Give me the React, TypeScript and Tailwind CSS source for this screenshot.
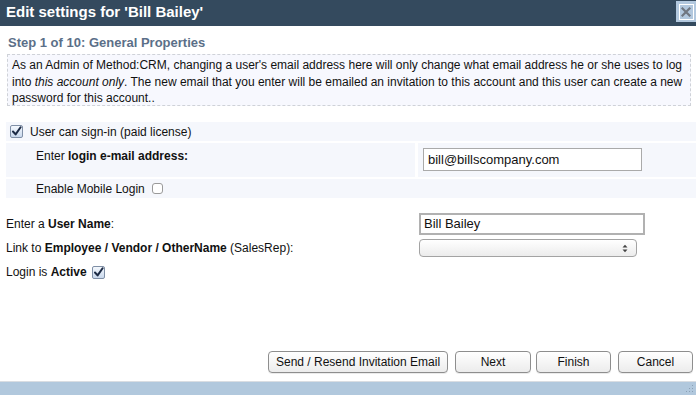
import React from "react"

function Check({ checked }: { checked: boolean }) {
  return (
    <span className="inline-flex w-[13px] h-[13px] shrink-0 items-center justify-center rounded-[2px] border border-[#7f8fa6] bg-gradient-to-b from-[#f4f8fd] to-[#c9d8ec]">
      {checked && (
        <svg width="11" height="11" viewBox="0 0 11 11">
          <path d="M2 5.5 L4.6 8.4 L9.6 1.2" fill="none" stroke="#1d2b45" strokeWidth="2" strokeLinecap="round" strokeLinejoin="round" />
        </svg>
      )}
    </span>
  )
}

function Button({ label, w }: { label: string; w: string }) {
  return (
    <button
      className={`${w} h-[22px] rounded-[4px] border border-[#8e8e8e] bg-gradient-to-b from-[#ffffff] to-[#ececec] text-[12px] text-[#111] shadow-[0_1px_0_rgba(0,0,0,0.08)]`}
    >
      {label}
    </button>
  )
}

export default function App() {
  return (
    <div
      className="w-[696px] h-[395px] flex flex-col bg-white text-[12px] text-[#111] overflow-hidden"
      style={{ fontFamily: '"Liberation Sans", Arial, sans-serif' }}
    >
      {/* Title bar */}
      <div className="h-[26px] shrink-0 bg-[#344a5e] flex items-start justify-between">
        <span className="pl-[6px] pt-[3px] text-[15px] font-bold text-white leading-[18px]">
          Edit settings for 'Bill Bailey'
        </span>
        <span className="mt-[1px] w-[20px] h-[21px] bg-[#b2c8de] flex items-center justify-center">
          <span className="w-[15px] h-[16px] border border-white flex items-center justify-center">
            <svg width="10" height="10" viewBox="0 0 10 10">
              <path d="M1.5 1.5 L8.5 8.5 M8.5 1.5 L1.5 8.5" stroke="#6f7680" strokeWidth="2.2" strokeLinecap="square" />
            </svg>
          </span>
        </span>
      </div>

      {/* Step header */}
      <div className="pl-[8px] pt-[9px] text-[13px] font-bold text-[#5b6f88] leading-[16px]">
        Step 1 of 10: General Properties
      </div>

      {/* Info box */}
      <div className="mt-[3px] ml-[7px] mr-[5px] h-[52px] overflow-hidden border border-dashed border-[#cfd2d8] bg-[#f7f8fe] px-[4px] pt-[2px] leading-[16.5px]">
        As an Admin of Method:CRM, changing a user's email address here will only change what email address he or she uses to log
        into <i>this account only</i>. The new email that you enter will be emailed an invitation to this account and this user can create a new
        password for this account..
      </div>

      {/* Sign-in block */}
      <div className="mt-[16px] ml-[6px] flex flex-col gap-[2px]">
        <div className="h-[19px] bg-[#f5f7fc] flex items-center pl-[4px] gap-[7px]">
          <Check checked />
          <span>User can sign-in (paid license)</span>
        </div>
        <div className="h-[34px] flex gap-[3px]">
          <div className="w-[409px] bg-[#f5f7fc] pl-[30px] pt-[4px]">
            Enter <b>login e-mail address:</b>
          </div>
          <div className="flex-1 bg-[#f5f7fc] pl-[5px] pt-[5px]">
            <div className="w-[219px] h-[23px] border border-[#aaaaaa] bg-white flex items-center pl-[4px] text-[13px]">
              bill@billscompany.com
            </div>
          </div>
        </div>
        <div className="h-[19px] bg-[#f5f7fc] flex items-center pl-[30px] gap-[7px]">
          <span>Enable Mobile Login</span>
          <span className="w-[11px] h-[11px] rounded-[3px] border border-[#9a9a9a] bg-white" />
        </div>
      </div>

      {/* User fields */}
      <div className="mt-[15px] pl-[6px] grid grid-cols-[413px_1fr] items-center">
        <span>
          Enter a <b>User Name</b>:
        </span>
        <div className="w-[226px] h-[22px] border-2 border-[#b1b1b1] bg-white flex items-center pl-[3px] text-[13px]">
          Bill Bailey
        </div>
        <span className="pt-[3px]">
          Link to <b>Employee / Vendor / OtherName</b> (SalesRep):
        </span>
        <div className="mt-[4px] w-[218px] h-[18px] rounded-[4px] border border-[#a3a3a3] bg-gradient-to-b from-[#ffffff] to-[#ececec] flex items-center justify-end pr-[8px]">
          <svg width="6" height="9" viewBox="0 0 6 9">
            <path d="M0.5 3.5 L3 0.8 L5.5 3.5 Z M0.5 5.5 L3 8.2 L5.5 5.5 Z" fill="#444" />
          </svg>
        </div>
      </div>
      <div className="mt-[6px] pl-[6px] flex items-center gap-[5px]">
        <span>
          Login is <b>Active</b>
        </span>
        <Check checked />
      </div>

      <div className="flex-1" />

      {/* Buttons */}
      <div className="flex justify-end items-center pr-[3px] pb-[8px]">
        <Button label="Send / Resend Invitation Email" w="w-[180px]" />
        <span className="w-[7px]" />
        <Button label="Next" w="w-[76px]" />
        <span className="w-[5px]" />
        <Button label="Finish" w="w-[75px]" />
        <span className="w-[7px]" />
        <Button label="Cancel" w="w-[75px]" />
      </div>

      {/* Footer */}
      <div className="h-[14px] shrink-0 border-t border-[#d9dde2] bg-[#b1c8dd] flex justify-end items-end pr-[2px] pb-[2px]">
        <svg width="8" height="8" viewBox="0 0 8 8">
          <rect x="6" y="0" width="1" height="1" fill="#8aa0b5" />
          <rect x="3" y="3" width="1" height="1" fill="#8aa0b5" />
          <rect x="6" y="3" width="1" height="1" fill="#8aa0b5" />
          <rect x="0" y="6" width="1" height="1" fill="#8aa0b5" />
          <rect x="3" y="6" width="1" height="1" fill="#8aa0b5" />
          <rect x="6" y="6" width="1" height="1" fill="#8aa0b5" />
        </svg>
      </div>
    </div>
  )
}
